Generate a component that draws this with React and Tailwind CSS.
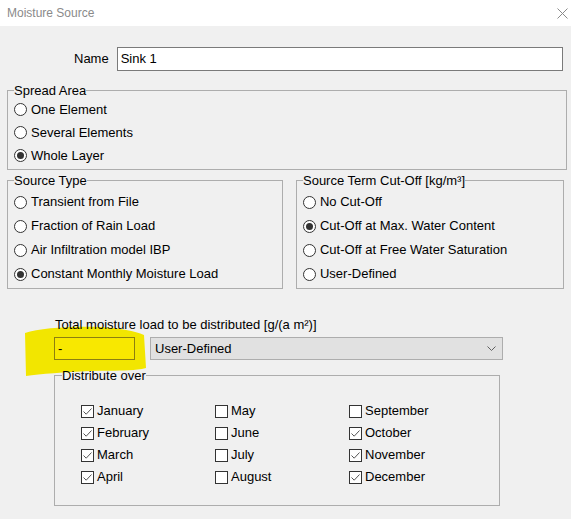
import React from "react";

function Radio({ checked, label }) {
  return (
    <div className="flex items-center h-full">
      <span className="w-[13px] h-[13px] rounded-full border border-[#333333] bg-white flex items-center justify-center shrink-0">
        {checked && <span className="w-[7px] h-[7px] rounded-full bg-[#333333]" />}
      </span>
      <span className="ml-[4px] whitespace-nowrap">{label}</span>
    </div>
  );
}

function Check({ checked, label }) {
  return (
    <div className="flex items-center h-[22px]">
      <span className="w-[13px] h-[13px] border border-[#333333] bg-white flex items-center justify-center shrink-0">
        {checked && (
          <svg width="11" height="11" viewBox="0 0 11 11">
            <polyline points="1.5,5.5 4.2,8.2 9.5,2.5" fill="none" stroke="#555555" strokeWidth="1" />
          </svg>
        )}
      </span>
      <span className="ml-[3px] whitespace-nowrap">{label}</span>
    </div>
  );
}

function Group({ title, className, children }) {
  return (
    <fieldset className={"border border-[#adadad] px-[6px] min-w-0 " + className}>
      <legend className="px-0 leading-[15px]">{title}</legend>
      {children}
    </fieldset>
  );
}

export default function App() {
  const months = [
    ["January", true], ["May", false], ["September", false],
    ["February", true], ["June", false], ["October", true],
    ["March", true], ["July", false], ["November", true],
    ["April", true], ["August", false], ["December", true],
  ];
  return (
    <div className="w-[571px] h-[519px] bg-[#f0f0f0] text-[13px] text-black font-['Liberation_Sans',Arial,sans-serif] relative overflow-hidden">
      {/* title bar */}
      <div className="h-[26px] bg-white flex items-center justify-between pl-[7px] pr-[3px]">
        <span className="text-[12px] text-[#8a8a8a] leading-none">Moisture Source</span>
        <svg width="11" height="11" viewBox="0 0 11 11">
          <path d="M0.5 0.5 L10.5 10.5 M10.5 0.5 L0.5 10.5" stroke="#8a8a8a" strokeWidth="1" />
        </svg>
      </div>

      {/* yellow highlighter */}
      <svg className="absolute left-0 top-0 pointer-events-none" width="571" height="519">
        <path
          d="M25 333 C40 328 70 326 100 327 C120 328 135 331 144 335 L146 368 C130 372 110 370 90 371 C65 372 40 374 26 376 Z"
          fill="#f2e600"
        />
      </svg>

      <div className="relative px-[7px]">
        {/* Name */}
        <div className="flex items-center mt-[21px]">
          <span className="ml-[67px]">Name</span>
          <div className="ml-[8px] w-[446px] h-[24px] border border-[#7a7a7a] bg-white flex items-center px-[3px]">
            Sink 1
          </div>
        </div>

        <Group title="Spread Area" className="mt-[12px] pt-0 pb-[2px] w-[560px]">
          <div className="h-[23px]"><Radio label="One Element" /></div>
          <div className="h-[23px]"><Radio label="Several Elements" /></div>
          <div className="h-[23px]"><Radio checked label="Whole Layer" /></div>
        </Group>

        <div className="flex mt-[3px]">
          <Group title="Source Type" className="w-[277px] pt-[2px] pb-[2px]">
            <div className="h-[24px]"><Radio label="Transient from File" /></div>
            <div className="h-[24px]"><Radio label="Fraction of Rain Load" /></div>
            <div className="h-[24px]"><Radio label="Air Infiltration model IBP" /></div>
            <div className="h-[24px]"><Radio checked label="Constant Monthly Moisture Load" /></div>
          </Group>
          <Group title="Source Term Cut-Off [kg/m³]" className="ml-[13px] w-[269px] pt-[2px] pb-[2px]">
            <div className="h-[24px]"><Radio label="No Cut-Off" /></div>
            <div className="h-[24px]"><Radio checked label="Cut-Off at Max. Water Content" /></div>
            <div className="h-[24px]"><Radio label="Cut-Off at Free Water Saturation" /></div>
            <div className="h-[24px]"><Radio label="User-Defined" /></div>
          </Group>
        </div>

        <div className="ml-[47px]">
          <div className="mt-[28px] ml-[1px] leading-[15px]">Total moisture load to be distributed [g/(a m²)]</div>
          <div className="flex mt-[5px]">
            <div className="w-[81px] h-[23px] border border-[#8c7f10] bg-[#f8e800] flex items-center px-[3px]">-</div>
            <div className="ml-[15px] w-[353px] h-[23px] border border-[#adadad] bg-[#e1e1e1] flex items-center justify-between pl-[4px] pr-[6px]">
              <span>User-Defined</span>
              <svg width="9" height="5" viewBox="0 0 9 5">
                <polyline points="0.5,0.5 4.5,4.5 8.5,0.5" fill="none" stroke="#606060" strokeWidth="1" />
              </svg>
            </div>
          </div>

          <fieldset className="mt-[8px] border border-[#adadad] pl-[26px] pr-[6px] pt-[17px] pb-[17px] w-[446px] min-w-0">
            <legend className="px-0 leading-[15px] -ml-[19px]">Distribute over</legend>
            <div className="grid grid-cols-[134px_134px_134px]">
              {months.map(([m, c]) => (
                <Check key={m} label={m} checked={c} />
              ))}
            </div>
          </fieldset>
        </div>
      </div>
    </div>
  );
}
